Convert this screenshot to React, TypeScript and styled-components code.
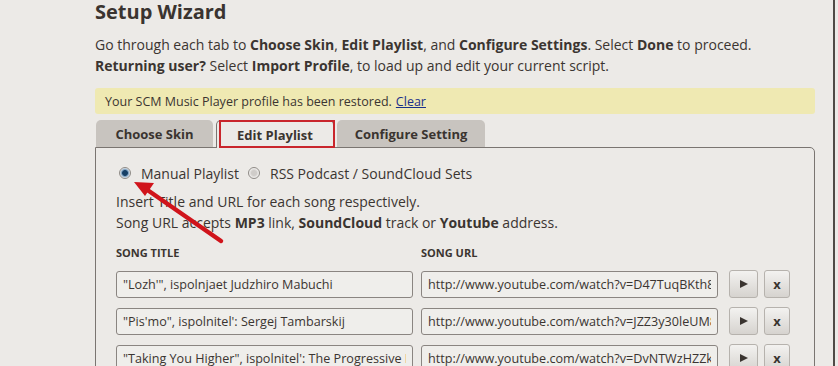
import React, { FC } from "react";
import styled, { createGlobalStyle } from "styled-components";

const GlobalStyle = createGlobalStyle`
  html, body {
    margin: 0;
    padding: 0;
    background: #eceae7;
    font-family: "Open Sans", "Noto Sans", sans-serif;
    color: #3b3531;
  }
`;

type Song = { title: string; url: string };

const songs: Song[] = [
  { title: "\"Lozh'\", ispolnjaet Judzhiro Mabuchi", url: "http://www.youtube.com/watch?v=D47TuqBKth8" },
  { title: "\"Pis'mo\", ispolnitel': Sergej Tambarskij", url: "http://www.youtube.com/watch?v=JZZ3y30leUM8" },
  { title: "\"Taking You Higher\", ispolnitel': The Progressive House", url: "http://www.youtube.com/watch?v=DvNTWzHZZk4" },
];

const Page = styled.div`
  position: relative;
  display: flex;
  width: 838px;
  height: 366px;
  overflow: hidden;
`;

const Main = styled.div`
  width: 835px;
  padding-left: 95px;
  padding-right: 18px;
  box-sizing: border-box;
  border-right: 2px solid #4f4a46;
`;

const Title = styled.h1`
  margin: 0;
  font-size: 20px;
  line-height: 24px;
  font-weight: 700;
  color: #3a3430;
`;

const Intro = styled.p`
  margin: 10px 0 0;
  font-size: 14px;
  line-height: 21px;
  b {
    font-weight: 700;
  }
`;

const Notice = styled.div`
  margin-top: 12px;
  height: 26px;
  padding-left: 10px;
  display: flex;
  align-items: center;
  background: #efe9b2;
  border-radius: 3px;
  font-size: 12.5px;
  a {
    margin-left: 4px;
    color: #1a2f8a;
    text-decoration: underline;
  }
`;

const Tabs = styled.div`
  display: flex;
  gap: 3px;
  margin-top: 6px;
  padding-left: 1px;
  height: 27px;
`;

const Tab = styled.div<{ $active?: boolean; $width: number }>`
  position: relative;
  width: ${(p) => p.$width}px;
  box-sizing: border-box;
  display: flex;
  align-items: center;
  justify-content: center;
  font-size: 13px;
  font-weight: 700;
  border-radius: 5px 5px 0 0;
  background: ${(p) => (p.$active ? "#eceae7" : "#c8c4bf")};
  border: ${(p) => (p.$active ? "1px solid #7a7571" : "none")};
  border-bottom: none;
  margin-bottom: ${(p) => (p.$active ? "-1px" : "0")};
  z-index: ${(p) => (p.$active ? 2 : 0)};
  color: #3a3430;
`;

const Highlight = styled.span`
  position: absolute;
  left: 2px;
  right: -2px;
  top: -1px;
  bottom: 0;
  border: 2px solid #c9262c;
`;

const Panel = styled.div`
  position: relative;
  border: 1px solid #7a7571;
  border-radius: 0 5px 0 0;
  padding: 15px 20px 0 20px;
  height: 240px;
  box-sizing: border-box;
`;

const RadioRow = styled.div`
  display: flex;
  align-items: center;
  font-size: 14px;
  height: 20px;
  padding-left: 3px;
`;

const RadioLabel = styled.label`
  display: flex;
  align-items: center;
  margin-right: 9px;
`;

const RadioDot = styled.span<{ $checked?: boolean }>`
  width: 12px;
  height: 12px;
  border-radius: 50%;
  margin-right: 10px;
  box-sizing: border-box;
  border: 1px solid #8e8a86;
  background: ${(p) =>
    p.$checked
      ? "radial-gradient(circle, #163f66 0 2.5px, #6f95b8 3.2px, #e6ecf2 5px)"
      : "radial-gradient(circle, #cfccc9 0 2.5px, #f4f3f1 5px)"};
`;

const Help = styled.p`
  margin: 8px 0 0;
  font-size: 14px;
  line-height: 21px;
  b {
    font-weight: 700;
  }
`;

const Grid = styled.div`
  display: grid;
  grid-template-columns: 297px 297px 29px 26px;
  column-gap: 8px;
  row-gap: 9px;
  margin-top: 13px;
  align-items: center;
`;

const Head = styled.div`
  font-size: 11px;
  font-weight: 700;
  text-transform: uppercase;
  line-height: 14px;
  height: 14px;
  margin-bottom: 1px;
`;

const HeadUrl = styled(Head)`
  grid-column: 2 / span 3;
`;

const Field = styled.input`
  height: 27px;
  box-sizing: border-box;
  border: 1px solid #8a8581;
  border-radius: 3px;
  background: #efeeeb;
  padding: 0 6px;
  font-family: "Open Sans", "Noto Sans", sans-serif;
  font-size: 12.6px;
  color: #3b3531;
  outline: none;
`;

const Button = styled.button<{ $w: number; $shift: number }>`
  width: ${(p) => p.$w}px;
  height: 28px;
  margin-left: ${(p) => p.$shift}px;
  padding: 0;
  border: 1px solid #b6b2ad;
  border-radius: 3px;
  background: linear-gradient(#f3f2f0, #d6d3cf);
  font-family: "Open Sans", "Noto Sans", sans-serif;
  font-size: 13px;
  font-weight: 700;
  color: #3a3430;
  display: flex;
  align-items: center;
  justify-content: center;
`;

const PlayGlyph = styled.span`
  width: 0;
  height: 0;
  border-top: 4px solid transparent;
  border-bottom: 4px solid transparent;
  border-left: 8px solid #3a3430;
`;

const Arrow = styled.svg`
  position: absolute;
  left: 0;
  top: 0;
  pointer-events: none;
`;

const App: FC = () => (
  <>
    <GlobalStyle />
    <Page>
      <Main>
        <Title>Setup Wizard</Title>
        <Intro>
          Go through each tab to <b>Choose Skin</b>, <b>Edit Playlist</b>, and <b>Configure Settings</b>. Select{" "}
          <b>Done</b> to proceed.
          <br />
          <b>Returning user?</b> Select <b>Import Profile</b>, to load up and edit your current script.
        </Intro>
        <Notice>
          Your SCM Music Player profile has been restored. <a href="#">Clear</a>
        </Notice>
        <Tabs>
          <Tab $width={117}>Choose Skin</Tab>
          <Tab $width={118} $active>
            Edit Playlist
            <Highlight />
          </Tab>
          <Tab $width={148}>Configure Setting</Tab>
        </Tabs>
        <Panel>
          <RadioRow>
            <RadioLabel>
              <RadioDot $checked />
              Manual Playlist
            </RadioLabel>
            <RadioLabel>
              <RadioDot />
              RSS Podcast / SoundCloud Sets
            </RadioLabel>
          </RadioRow>
          <Help>
            Insert Title and URL for each song respectively.
            <br />
            Song URL accepts <b>MP3</b> link, <b>SoundCloud</b> track or <b>Youtube</b> address.
          </Help>
          <Grid>
            <Head>Song Title</Head>
            <HeadUrl>Song URL</HeadUrl>
            {songs.map((s) => (
              <React.Fragment key={s.url}>
                <Field defaultValue={s.title} />
                <Field defaultValue={s.url} />
                <Button $w={29} $shift={3}>
                  <PlayGlyph />
                </Button>
                <Button $w={26} $shift={1}>x</Button>
              </React.Fragment>
            ))}
          </Grid>
        </Panel>
      </Main>
      <Arrow width="838" height="366" viewBox="0 0 838 366">
        <line x1="221" y1="241" x2="146" y2="189" stroke="#d0141b" strokeWidth="4.5" strokeLinecap="round" />
        <polygon points="134,182 154,183 145,196" fill="#d0141b" />
      </Arrow>
    </Page>
  </>
);

export default App;
